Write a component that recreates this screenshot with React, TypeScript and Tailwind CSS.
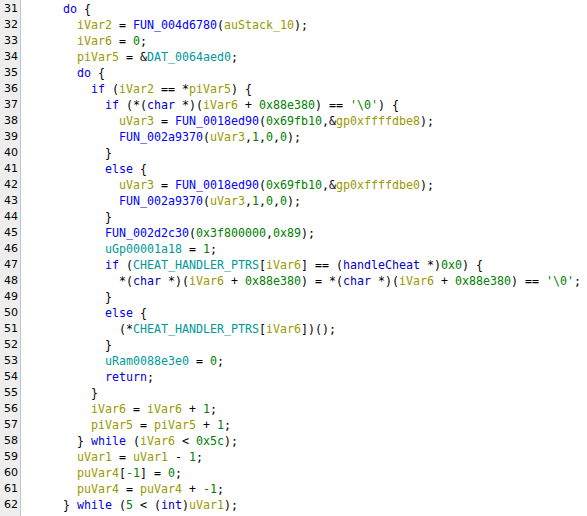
type Seg = [string, string];

// token colours (Ghidra decompiler defaults)
const colors: Record<string, string> = {
  p: 'text-black',
  k: 'text-[#0001e6]',
  t: 'text-[#0000bf]',
  f: 'text-[#0000ff]',
  v: 'text-[#999900]',
  c: 'text-[#008000]',
  g: 'text-[#009999]',
}

const p = (s: string): Seg => ['p', s]
const k = (s: string): Seg => ['k', s]
const t = (s: string): Seg => ['t', s]
const f = (s: string): Seg => ['f', s]
const v = (s: string): Seg => ['v', s]
const c = (s: string): Seg => ['c', s]
const g = (s: string): Seg => ['g', s]

const lines: { n: number; indent: number; segs: Seg[] }[] = [
  { n: 30, indent: 0, segs: [v('puVar4'), p(' = &'), v('uStack_28'), p(';')] },
  { n: 31, indent: 0, segs: [k('do'), p(' {')] },
  { n: 32, indent: 1, segs: [v('iVar2'), p(' = '), f('FUN_004d6780'), p('('), v('auStack_10'), p(');')] },
  { n: 33, indent: 1, segs: [v('iVar6'), p(' = '), c('0'), p(';')] },
  { n: 34, indent: 1, segs: [v('piVar5'), p(' = &'), g('DAT_0064aed0'), p(';')] },
  { n: 35, indent: 1, segs: [k('do'), p(' {')] },
  { n: 36, indent: 2, segs: [k('if'), p(' ('), v('iVar2'), p(' == *'), v('piVar5'), p(') {')] },
  {
    n: 37,
    indent: 3,
    segs: [k('if'), p(' (*('), t('char'), p(' *)('), v('iVar6'), p(' + '), c('0x88e380'), p(') == '), c("'\\0'"), p(') {')],
  },
  {
    n: 38,
    indent: 4,
    segs: [v('uVar3'), p(' = '), f('FUN_0018ed90'), p('('), c('0x69fb10'), p(',&'), v('gp0xffffdbe8'), p(');')],
  },
  { n: 39, indent: 4, segs: [f('FUN_002a9370'), p('('), v('uVar3'), p(','), c('1'), p(','), c('0'), p(','), c('0'), p(');')] },
  { n: 40, indent: 3, segs: [p('}')] },
  { n: 41, indent: 3, segs: [k('else'), p(' {')] },
  {
    n: 42,
    indent: 4,
    segs: [v('uVar3'), p(' = '), f('FUN_0018ed90'), p('('), c('0x69fb10'), p(',&'), v('gp0xffffdbe0'), p(');')],
  },
  { n: 43, indent: 4, segs: [f('FUN_002a9370'), p('('), v('uVar3'), p(','), c('1'), p(','), c('0'), p(','), c('0'), p(');')] },
  { n: 44, indent: 3, segs: [p('}')] },
  { n: 45, indent: 3, segs: [f('FUN_002d2c30'), p('('), c('0x3f800000'), p(','), c('0x89'), p(');')] },
  { n: 46, indent: 3, segs: [g('uGp00001a18'), p(' = '), c('1'), p(';')] },
  {
    n: 47,
    indent: 3,
    segs: [k('if'), p(' ('), g('CHEAT_HANDLER_PTRS'), p('['), v('iVar6'), p('] == ('), t('handleCheat'), p(' *)'), c('0x0'), p(') {')],
  },
  {
    n: 48,
    indent: 4,
    segs: [
      p('*('), t('char'), p(' *)('), v('iVar6'), p(' + '), c('0x88e380'), p(') = *('),
      t('char'), p(' *)('), v('iVar6'), p(' + '), c('0x88e380'), p(') == '), c("'\\0'"), p(';'),
    ],
  },
  { n: 49, indent: 3, segs: [p('}')] },
  { n: 50, indent: 3, segs: [k('else'), p(' {')] },
  { n: 51, indent: 4, segs: [p('(*'), g('CHEAT_HANDLER_PTRS'), p('['), v('iVar6'), p('])();')] },
  { n: 52, indent: 3, segs: [p('}')] },
  { n: 53, indent: 3, segs: [g('uRam0088e3e0'), p(' = '), c('0'), p(';')] },
  { n: 54, indent: 3, segs: [k('return'), p(';')] },
  { n: 55, indent: 2, segs: [p('}')] },
  { n: 56, indent: 2, segs: [v('iVar6'), p(' = '), v('iVar6'), p(' + '), c('1'), p(';')] },
  { n: 57, indent: 2, segs: [v('piVar5'), p(' = '), v('piVar5'), p(' + '), c('1'), p(';')] },
  { n: 58, indent: 1, segs: [p('} '), k('while'), p(' ('), v('iVar6'), p(' < '), c('0x5c'), p(');')] },
  { n: 59, indent: 1, segs: [v('uVar1'), p(' = '), v('uVar1'), p(' - '), c('1'), p(';')] },
  { n: 60, indent: 1, segs: [v('puVar4'), p('['), c('-1'), p('] = '), c('0'), p(';')] },
  { n: 61, indent: 1, segs: [v('puVar4'), p(' = '), v('puVar4'), p(' + '), c('-1'), p(';')] },
  { n: 62, indent: 0, segs: [p('} '), k('while'), p(' ('), c('5'), p(' < ('), t('int'), p(')'), v('uVar1'), p(');')] },
]

export default function App() {
  return (
    <div className="w-[587px] h-[516px] overflow-hidden bg-white">
      <div className="flex mt-[-15px] min-h-[540px]">
        {/* gutter */}
        <div className="w-[21px] shrink-0 bg-[#eeeeee] border-r border-[#c4c4c4] font-['DejaVu_Sans',sans-serif] text-[11px] text-black">
          {lines.map((l) => (
            <div key={l.n} className="h-[16px] leading-[16px] pl-[4px]">
              {l.n}
            </div>
          ))}
        </div>
        {/* code */}
        <div className="pl-[42px] font-['DejaVu_Sans_Mono',monospace] text-[11.63px] whitespace-pre">
          {lines.map((l) => (
            <div key={l.n} className="h-[16px] leading-[16px]">
              {'  '.repeat(l.indent)}
              {l.segs.map(([kind, s], i) => (
                <span key={i} className={colors[kind]}>
                  {s}
                </span>
              ))}
            </div>
          ))}
        </div>
      </div>
    </div>
  )
}
